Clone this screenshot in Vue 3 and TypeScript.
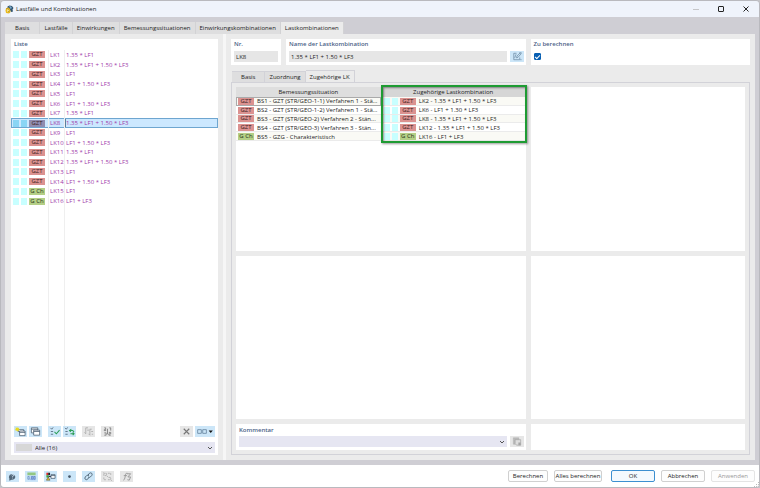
<script setup lang="ts">
import { ref } from 'vue'

interface Combination { no: string; kind: string; formula: string }
interface Situation { kind: string; name: string; related: string }

const mainTabs = ['Basis', 'Lastfälle', 'Einwirkungen', 'Bemessungssituationen', 'Einwirkungskombinationen', 'Lastkombinationen']
const subTabs = ['Basis', 'Zuordnung', 'Zugehörige LK']
const activeMain = ref('Lastkombinationen')
const activeSub = ref('Zugehörige LK')
const selected = ref('LK8')
const name = ref('1.35 * LF1 + 1.50 * LF3')
const calculate = ref(true)

const formulas = [
  '1.35 * LF1', '1.35 * LF1 + 1.50 * LF3', 'LF1', 'LF1 + 1.50 * LF3',
  'LF1', 'LF1 + 1.30 * LF3', '1.35 * LF1', '1.35 * LF1 + 1.50 * LF3',
  'LF1', 'LF1 + 1.50 * LF3', '1.35 * LF1', '1.35 * LF1 + 1.50 * LF3',
  'LF1', 'LF1 + 1.50 * LF3', 'LF1', 'LF1 + LF3',
]
const combinations: Combination[] = formulas.map((formula, i) => ({
  no: `LK${i + 1}`,
  kind: i < 14 ? 'GZT' : 'G Ch',
  formula,
}))

const situations: Situation[] = [
  { kind: 'GZT', name: 'BS1 - GZT (STR/GEO-1-1) Verfahren 1 - Stä...', related: 'LK2 - 1.35 * LF1 + 1.50 * LF3' },
  { kind: 'GZT', name: 'BS2 - GZT (STR/GEO-1-2) Verfahren 1 - Stä...', related: 'LK6 - LF1 + 1.30 * LF3' },
  { kind: 'GZT', name: 'BS3 - GZT (STR/GEO-2) Verfahren 2 - Stän...', related: 'LK8 - 1.35 * LF1 + 1.50 * LF3' },
  { kind: 'GZT', name: 'BS4 - GZT (STR/GEO-3) Verfahren 3 - Stän...', related: 'LK12 - 1.35 * LF1 + 1.50 * LF3' },
  { kind: 'G Ch', name: 'BS5 - GZG - Charakteristisch', related: 'LK16 - LF1 + LF3' },
]
</script>

<template>
  <div class="window">
    <header class="titlebar">
      <svg class="logo" viewBox="0 0 18 18" aria-hidden="true">
        <path d="M5 3l4-2 5 1 3 4-2 3 1 4-4 1-2-4-5-1z" fill="#31536f" />
        <path d="M8 2l4 1 2 3-3 2z" fill="#78a9cc" />
        <path d="M2 7l5-2 3 3 1 6-3 3-6-1-1-5z" fill="#e9bb20" />
        <path d="M4 9l3-1 1 3-2 3-2-1z" fill="#fff0a0" />
        <path d="M2 7l5 1 1 3M5 12l4 2" stroke="#96720f" fill="none" />
      </svg>
      <h1>Lastfälle und Kombinationen</h1>
      <button class="win-btn off" aria-label="Minimieren"><svg viewBox="0 0 8 8"><path d="M1 4.500h6" /></svg></button>
      <button class="win-btn" aria-label="Maximieren"><svg viewBox="0 0 8 8"><rect x="1.500" y="1.500" width="5" height="5" rx=".5" /></svg></button>
      <button class="win-btn" aria-label="Schließen"><svg viewBox="0 0 8 8"><path d="M1.500 1.500l5 5M6.500 1.500l-5 5" /></svg></button>
    </header>

    <div class="body">
      <nav class="main-tabs" role="tablist">
        <button v-for="t in mainTabs" :key="t" role="tab" :aria-selected="t === activeMain" :class="{ active: t === activeMain }" @click="activeMain = t">{{ t }}</button>
      </nav>

      <main class="page">
        <section class="left">
          <div class="list-card">
            <h2>Liste</h2>
            <div class="list-area">
              <table class="combos">
                <tbody>
                  <tr v-for="c in combinations" :key="c.no" :class="{ selected: c.no === selected }" @click="selected = c.no">
                    <td class="kind"><div class="marks"><i class="sq"></i><i class="sq"></i><span class="badge" :class="{ green: c.kind === 'G Ch' }">{{ c.kind }}</span></div></td>
                    <td class="no">{{ c.no }}</td>
                    <td class="formula">{{ c.formula }}</td>
                  </tr>
                </tbody>
              </table>
              <div class="rules"><i></i><i></i></div>
            </div>
            <div class="toolbar">
              <div class="group">
                <button class="tool on" aria-label="Neu"><svg viewBox="0 0 26 24"><path d="M8 8h12v4H8z" class="ink" fill="#fff" /><path d="M11 11h12v10H11zM11 14h12" class="ink" fill="#fff" /><path d="M6 2l1 3 3-2-1 3 3 1-3 1 1 3-3-1-1 3-1-3-3 1 1-3-3-1 3-1-1-3 3 1z" fill="#e9d91c" /></svg></button>
                <button class="tool on" aria-label="Kopieren"><svg viewBox="0 0 26 24"><path d="M4 4h14v11H4zM4 7h14" class="ink" fill="#fff" /><path d="M9 9h13v11H9zM9 12h13" class="ink" fill="#fff" /></svg></button>
              </div>
              <div class="group">
                <button class="tool on" aria-label="Alle auswählen"><svg viewBox="0 0 26 24"><path d="M4 4l3 3 3-4M5 12h5M5 18h5" class="ink" fill="none" /><path d="M13 13l4 4 7-8" class="go" /></svg></button>
                <button class="tool on" aria-label="Auswahl umkehren"><svg viewBox="0 0 26 24"><path d="M3 4l3 3 3-4M4 12h5M4 18h5" class="ink" fill="none" /><path d="M12 10h8l3 3M17 7l-4 3 3 3M23 17h-8M20 14l3 3-3 3" class="go" /></svg></button>
              </div>
              <button class="tool" aria-label="Neu ordnen" disabled><svg viewBox="0 0 26 24"><path d="M7 4v13l-3-3M7 4h5M10 9h4M16 7v13l-3-3M16 7h4M19 12h4M20 18h3" class="dim" /></svg></button>
              <button class="tool" aria-label="Nummerieren" disabled><svg viewBox="0 0 26 24"><path d="M6 4h3v4H6v2h4M6 15h4v5H6M17 4h3v6M16 14h4v3h-4v3h4M13 6v12" class="dark" /></svg></button>
              <div class="group end">
                <button class="tool" aria-label="Löschen"><svg viewBox="0 0 26 24"><path d="M7 6l12 12M19 6L7 18" stroke="#777" stroke-width="2.500" fill="none" /></svg></button>
                <button class="tool on wide" aria-label="Ansicht"><svg viewBox="0 0 40 24"><path d="M4 8h8v8H4zM15 8h8v8h-8z" stroke="#5a7896" stroke-width="1.600" fill="none" /><path d="M28 10h9l-4.500 5z" fill="#111" /></svg></button>
              </div>
            </div>
            <div class="combo-box filter">
              <i class="swatch"></i>
              <select aria-label="Filter"><option>Alle (16)</option></select>
              <svg class="chev" viewBox="0 0 6 6"><path d="M1 2l2 2 2-2" /></svg>
            </div>
          </div>
        </section>

        <div class="splitter"></div>

        <section class="right">
          <div class="fields">
            <div class="card nr"><label for="nr">Nr.</label><div class="line"><input id="nr" value="LK8" readonly /></div></div>
            <div class="card title-field">
              <label for="name">Name der Lastkombination</label>
              <div class="line">
                <input id="name" v-model="name" />
                <button class="tool on" aria-label="Name bearbeiten"><svg viewBox="0 0 26 24"><path d="M12 5H6v14h13v-5M12 15l1-4 7-7 2 2-7 8zM8 15l3-8M20 19h3M18 4h5" stroke="#64839e" stroke-width="1.500" fill="none" /></svg></button>
              </div>
            </div>
            <div class="card calc"><label for="calc">Zu berechnen</label><div class="line"><input id="calc" v-model="calculate" type="checkbox" /></div></div>
          </div>

          <nav class="sub-tabs" role="tablist">
            <button v-for="t in subTabs" :key="t" role="tab" :aria-selected="t === activeSub" :class="{ active: t === activeSub }" @click="activeSub = t">{{ t }}</button>
          </nav>

          <div class="tab-page">
            <div class="pane related">
              <table class="situations">
                <thead><tr><th>Bemessungssituation</th><th>Zugehörige Lastkombination</th></tr></thead>
                <tbody>
                  <tr v-for="s in situations" :key="s.name">
                    <td><div class="cell"><span class="badge" :class="{ green: s.kind === 'G Ch' }">{{ s.kind }}</span><span class="text">{{ s.name }}</span></div></td>
                    <td><div class="cell second"><i class="sq"></i><i class="sq"></i><span class="badge" :class="{ green: s.kind === 'G Ch' }">{{ s.kind }}</span><span class="text">{{ s.related }}</span></div></td>
                  </tr>
                </tbody>
              </table>
              <div class="highlight"></div>
            </div>
            <div class="pane"></div>
            <div class="pane"></div>
            <div class="pane"></div>
            <div class="pane comment">
              <label for="comment">Kommentar</label>
              <div class="line">
                <div class="combo-box">
                  <select id="comment"><option></option></select>
                  <svg class="chev" viewBox="0 0 6 6"><path d="M1 2l2 2 2-2" /></svg>
                </div>
                <button class="tool" aria-label="Kommentar übernehmen" disabled><svg viewBox="0 0 26 24"><path d="M5 4h12v4H9v10H5z" fill="#bbb" stroke="#aaa" /><path d="M9 8h12v12h-9l-3-3z" fill="#ddd" stroke="#a5a5a5" stroke-width="1.500" /><path d="M16 14h5v6h-5z" fill="#a5a5a5" /></svg></button>
              </div>
            </div>
            <div class="pane"></div>
          </div>
        </section>
      </main>
    </div>

    <footer class="footer">
      <div class="foot-tools">
        <button class="tool on" aria-label="Hilfe"><svg viewBox="0 0 26 24"><path d="M6 16a7 6 0 1 1 5 3l-5 2z" fill="#526779" /><path d="M11 9q3-3 5 0 0 2-3 3v2M13 16v1" stroke="#dcefff" stroke-width="1.600" fill="none" /></svg></button>
        <button class="tool on" aria-label="Einheiten"><svg viewBox="0 0 26 24"><path d="M4 3h18v6H4z" fill="#93c782" /><path d="M11 11h11v9H11z" fill="#a9c2f2" /><path d="M5 12h3v6H5zM10 17v2M13 12h3v6h-3zM18 12h3v6h-3z" stroke="#4a72b2" stroke-width="1.200" fill="none" /></svg></button>
        <button class="tool on" aria-label="Anzeige"><svg viewBox="0 0 26 24"><path d="M4 4h4v5H4z" fill="#e02929" /><path d="M8 4h4v5H8z" fill="#222" /><path d="M4 9h5v5H4z" fill="#3aa83c" /><path d="M4 20l4-7 4 7z" fill="#e5c22d" stroke="#333" /><path d="M9 12h5" stroke="#223" stroke-width="2" /><path d="M14 8h9v8h-9zM14 10h9" class="ink" fill="#fff" /></svg></button>
        <button class="tool on" aria-label="Punkt"><svg viewBox="0 0 26 24"><circle cx="13" cy="12" r="3" fill="#465869" /></svg></button>
        <button class="tool on" aria-label="Verknüpfen"><svg viewBox="0 0 26 24"><path d="M12 9l3-4q3-2 5 0t0 5l-3 3q-2 2-5 0M14 14l-3 4q-3 2-5 0t0-5l3-3q3-2 5 0" stroke="#4d6274" stroke-width="2" fill="none" /></svg></button>
        <button class="tool" aria-label="Verknüpfung lösen" disabled><svg viewBox="0 0 26 24"><path d="M5 5h6v5H5zM14 5h6v5M5 14v5h6M14 19h6v-5h-5M3 3l2 2M12 11l4 4M21 20l2 2" stroke="#aaa" stroke-width="1.800" fill="none" stroke-dasharray="4 1.500" /></svg></button>
        <button class="tool" aria-label="Formeln" disabled><svg viewBox="0 0 26 24"><path d="M6 20q3 0 4-7l1-6q1-3 4-2M7 10h7M14 6h8l-6 7h6l-3 7M15 19l4 1" stroke="#999" stroke-width="2" fill="none" /></svg></button>
      </div>
      <div class="actions">
        <button class="short">Berechnen</button>
        <button class="long">Alles berechnen</button>
        <button class="primary">OK</button>
        <button>Abbrechen</button>
        <button disabled>Anwenden</button>
      </div>
      <svg class="grip" viewBox="0 0 5 5"><path d="M4 0h1v1H4zM2 2h1v1H2zM4 2h1v1H4zM0 4h1v1H0zM2 4h1v1H2zM4 4h1v1H4z" fill="#bbb" /></svg>
    </footer>
  </div>
</template>

<style>
body { margin: 0; background: #c4c4c8; }
</style>

<style scoped>
* { box-sizing: border-box; }
.window {
  min-height: 100vh;
  display: flex;
  flex-direction: column;
  font: 500 6px/8px "Open Sans", "Noto Sans", sans-serif;
  color: #1c1c1c;
  background: #cfced4;
  border: 1px solid #b9b9be;
  border-radius: 4px;
  overflow: hidden;
}
button, input, select { font: inherit; color: inherit; margin: 0; padding: 0; border: 0; border-radius: 0; }
h1, h2 { margin: 0; font: inherit; }
svg { display: block; }
label, h2 { display: block; font-weight: 600; color: #4b6186; }

.titlebar { display: flex; align-items: center; height: 16px; padding: 0 8px 0 4px; background: #eff3fb; }
.logo { width: 9px; height: 9px; }
.titlebar h1 { flex: 1; margin-left: 2px; }
.win-btn { width: 9px; margin-left: 16px; background: none; }
.win-btn svg { width: 8px; height: 8px; fill: none; stroke: #222; stroke-width: 1; }
.win-btn.off svg { stroke: #c5c5c8; }

.body { flex: 1; display: flex; flex-direction: column; padding: 5px 4px; }
.main-tabs { display: flex; height: 12px; }
.main-tabs button { padding: 0 4px; background: #dededf; border-right: 1px solid #d2d2d4; }
.main-tabs button:first-child { padding: 0 10px; }
.main-tabs button.active { background: #ebebeb; }

.page { flex: 1; display: grid; grid-template-columns: minmax(0, 218fr) 3px minmax(0, 529fr); background: #ebebeb; }
.left { display: flex; padding: 5px 5px 5px 6px; }
.splitter { background: #f6f6f6; }
.right { display: flex; flex-direction: column; padding: 5px; }

.list-card { flex: 1; min-width: 0; display: flex; flex-direction: column; background: #fff; padding: 1px 0 2px; }
.list-card h2 { padding: 0 3px; height: 10px; }
.list-area { flex: 1; position: relative; }
.combos { width: 100%; height: 156px; table-layout: fixed; border-collapse: collapse; color: #a037a8; }
.combos td { padding: 0; white-space: nowrap; line-height: 8px; }
.combos .kind { width: 37px; }
.combos .no { width: 17px; padding-left: 2px; }
.combos .formula { padding-left: 1px; }
.marks { display: flex; gap: 2px; padding-left: 2px; }
.sq { width: 6px; height: 7px; background: #c8ffff; }
.badge { width: 16px; height: 7px; line-height: 7px; text-align: center; background: #db9290; color: #3c2020; }
.badge.green { background: #b4cf86; color: #26331a; }
.selected { background: #cce8ff; outline: 1px solid #6ea6d0; outline-offset: -1px; }
.selected .formula { outline: 1px solid #5d7f9d; outline-offset: -1px; }
.selected .sq { background: #8ad5f5; }
.selected .badge { background: #8f8cb0; }
.rules { position: absolute; inset: 0; display: flex; gap: 15px; padding-left: 37px; pointer-events: none; }
.rules i { width: 1px; background: #efefef; }

.toolbar { display: flex; align-items: flex-start; gap: 6px; height: 15px; padding: 0 3px; }
.group { display: flex; gap: 2px; }
.group.end { margin-left: auto; }
.tool { flex: none; width: 13px; height: 11px; background: #e6e6e6; }
.tool.on { background: #cce6f8; }
.tool.wide { width: 20px; }
.tool svg { width: 100%; height: 100%; }
.ink { stroke: #41556a; stroke-width: 1.600; }
.go { stroke: #2b9e56; stroke-width: 2.200; fill: none; }
.dim { stroke: #aaa; stroke-width: 1.800; fill: none; }
.dark { stroke: #777; stroke-width: 1.800; fill: none; }

.combo-box { flex: 1; min-width: 0; display: flex; align-items: center; height: 11px; background: #e6e6f2; padding-right: 2px; }
.combo-box select { flex: 1; min-width: 0; height: 11px; appearance: none; background: none; }
.combo-box.filter { flex: none; margin: 1px 3px 0; padding-left: 2px; gap: 3px; }
.swatch { width: 16px; height: 7px; background: #d7d7d7; }
.chev { width: 6px; height: 6px; fill: none; stroke: #555; stroke-width: 1; }

.fields { display: grid; grid-template-columns: minmax(0, 50fr) minmax(0, 239fr) minmax(0, 219fr); gap: 5px; height: 26px; }
.card { background: #fff; padding: 1px 3px 0; }
.card.title-field { padding-right: 2px; }
.line { display: flex; align-items: center; gap: 3px; height: 11px; margin-top: 3px; }
.line input { flex: 1; min-width: 0; height: 11px; padding-left: 2px; background: #e6e6e6; }
.line .tool { width: 14px; }
.line input[type="checkbox"] {
  flex: none;
  appearance: none;
  width: 7px;
  height: 7px;
  padding: 0;
  border: 1px solid #075fb3;
  border-radius: 1px;
  background: #fff;
  display: grid;
  place-items: center;
}
.line input[type="checkbox"]:checked { background: #075fb3; }
.line input[type="checkbox"]:checked::before { content: ""; width: 4px; height: 2px; border: solid #fff; border-width: 0 0 1px 1px; rotate: -45deg; }

.sub-tabs { display: flex; align-items: stretch; height: 12px; margin: 5px 0 0 1px; }
.sub-tabs button { margin-top: 1px; padding: 0 4px; background: #dededf; border: 1px solid #d2d2d8; border-width: 1px 1px 0 0; }
.sub-tabs button:first-child { padding: 0 9px; }
.sub-tabs button.active { margin-top: 0; background: #ebebeb; }
.tab-page {
  flex: 1;
  display: grid;
  grid-template-columns: minmax(0, 289fr) minmax(0, 214fr);
  grid-template-rows: 1fr 1fr 26px;
  gap: 5px;
  padding: 4px;
  border: 1px solid #d2d2d8;
}
.pane { min-width: 0; background: #fff; }
.related { position: relative; }
.situations { width: 100%; height: 54px; table-layout: fixed; border-collapse: collapse; }
.situations th { height: 10px; padding: 0; font-weight: 500; line-height: 8px; text-align: center; background: #dedede; }
.situations th + th { background: #d6d6d6; }
.situations td { padding: 0; box-shadow: inset 0 -1px #ebebeb; }
.situations tr:nth-child(odd) td { background: #fafaf5; }
.situations tbody tr:first-child td:first-child { outline: 1px solid #aaa; outline-offset: -1px; }
.cell { display: flex; align-items: center; gap: 2px; height: 8px; padding-left: 2px; }
.cell.second { padding-left: 3px; }
.cell .badge, .cell .sq { flex: none; }
.cell .text { flex: 1; min-width: 0; white-space: nowrap; padding-left: 1px; }
.highlight { position: absolute; left: 50%; right: -1px; top: -2px; height: 58px; border: 2px solid #1e9b33; box-shadow: 1px 1px 2px #0006, inset 1px 1px 2px #0006; pointer-events: none; }
.comment { padding: 2px 2px 0 3px; }
.comment .line { margin-top: 2px; }

.footer { position: relative; display: flex; align-items: center; justify-content: space-between; height: 22px; padding: 0 4px 0 5px; background: #fff; }
.foot-tools, .actions { display: flex; gap: 6px; }
.actions button { width: 44px; height: 12px; background: #fdfdfd; border: 1px solid #d0d0d0; border-radius: 2px; white-space: nowrap; }
.actions .short { width: 40px; }
.actions .long { width: 48px; margin-right: 3px; }
.actions .primary { border-color: #3c8fd0; background: #f3f9fe; }
.actions button:disabled { color: #999; border-color: #e4e4e4; }
.grip { position: absolute; right: 0; bottom: 0; width: 5px; height: 5px; }
</style>
